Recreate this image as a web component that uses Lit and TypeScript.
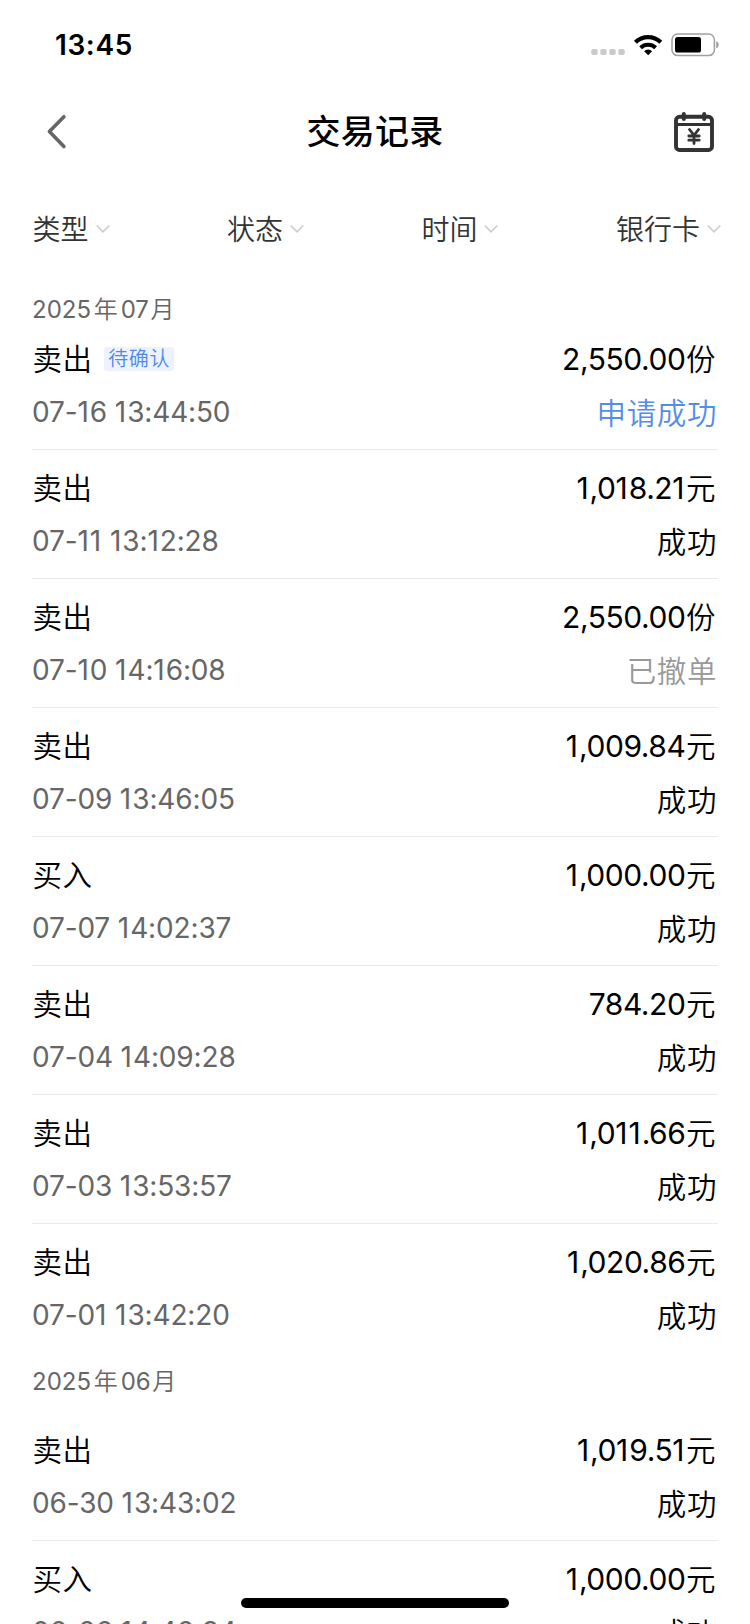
import { LitElement, html, css, svg } from "lit";
import { customElement, property } from "lit/decorators.js";
import { classMap } from "lit/directives/class-map.js";

type Tone = "normal" | "pending" | "muted";

interface Trade {
  kind: string;
  tag?: string;
  time: string;
  amount: string;
  unit: string;
  status: string;
  tone?: Tone;
}

interface MonthGroup {
  year: string;
  month: string;
  trades: Trade[];
}

const GROUPS: MonthGroup[] = [
  {
    year: "2025",
    month: "07",
    trades: [
      { kind: "卖出", tag: "待确认", time: "07-16 13:44:50", amount: "2,550.00", unit: "份", status: "申请成功", tone: "pending" },
      { kind: "卖出", time: "07-11 13:12:28", amount: "1,018.21", unit: "元", status: "成功" },
      { kind: "卖出", time: "07-10 14:16:08", amount: "2,550.00", unit: "份", status: "已撤单", tone: "muted" },
      { kind: "卖出", time: "07-09 13:46:05", amount: "1,009.84", unit: "元", status: "成功" },
      { kind: "买入", time: "07-07 14:02:37", amount: "1,000.00", unit: "元", status: "成功" },
      { kind: "卖出", time: "07-04 14:09:28", amount: "784.20", unit: "元", status: "成功" },
      { kind: "卖出", time: "07-03 13:53:57", amount: "1,011.66", unit: "元", status: "成功" },
      { kind: "卖出", time: "07-01 13:42:20", amount: "1,020.86", unit: "元", status: "成功" },
    ],
  },
  {
    year: "2025",
    month: "06",
    trades: [
      { kind: "卖出", time: "06-30 13:43:02", amount: "1,019.51", unit: "元", status: "成功" },
      { kind: "买入", time: "06-26 14:46:34", amount: "1,000.00", unit: "元", status: "成功" },
    ],
  },
];

/** Gives the narrow digit 1 a little more room than its neighbours. */
const spaced = (text: string) =>
  text.split(/(1)/).map((part) => (part === "1" ? html`<span class="one">1</span>` : part));

@customElement("status-bar")
export class StatusBar extends LitElement {
  static styles = css`
    :host {
      display: flex;
      justify-content: space-between;
      height: 90px;
      padding: 0 30px 0 55px;
      box-sizing: border-box;
      align-items: center;
    }
    .clock {
      font-size: 28px;
      font-weight: 600;
      line-height: 34px;
      letter-spacing: 0.6px;
    }
    .icons {
      display: block;
    }
  `;

  render() {
    return html`
      <span class="clock">13:45</span>
      <svg class="icons" width="130" height="30" viewBox="590 30 130 30">
        <g fill="#cacaca">
          ${[591.3, 600.3, 609.3, 618.3].map((x) => svg`<rect x=${x} y="49" width="6.4" height="6" rx="1.8" />`)}
        </g>
        <g fill="none" stroke="#000" stroke-width="4.2">
          <path d="M635.4 42.2a18.3 18.3 0 0 1 25.4 0" />
          <path d="M640.6 47.8a11 11 0 0 1 15 0" stroke-width="4" />
        </g>
        <path d="M648.1 55.2l-4-4a5.8 5.8 0 0 1 8 0z" />
        <rect x="672" y="34.1" width="42.4" height="21.4" rx="5.6" fill="none" stroke="#a0a0a0" stroke-width="1.5" />
        <rect x="675" y="37.1" width="26" height="15.4" rx="2.6" />
        <path d="M716.2 41.2c3.4 1.2 3.4 5.8 0 7z" fill="#a0a0a0" />
      </svg>
    `;
  }
}

@customElement("nav-header")
export class NavHeader extends LitElement {
  static styles = css`
    :host {
      display: grid;
      grid-template-columns: 60px 1fr 60px;
      align-items: center;
      height: 84px;
      padding: 0 30px;
    }
    .title {
      margin: 0;
      font-size: 34px;
      font-weight: 500;
      line-height: 48px;
      text-align: center;
      letter-spacing: 0.3px;
    }
    .back,
    .calendar {
      display: block;
    }
    .back {
      margin-left: 10px;
    }
    .calendar {
      justify-self: end;
    }
  `;

  render() {
    return html`
      <svg class="back" width="34" height="40" viewBox="0 0 34 40">
        <path d="M23.9 4.7L9.4 19.6 23.9 34.5" fill="none" stroke="#666" stroke-width="3.6" stroke-linecap="round" stroke-linejoin="round" />
      </svg>
      <h1 class="title">交易记录</h1>
      <svg class="calendar" width="52" height="48" viewBox="668 108 52 48" fill="none" stroke="#333" stroke-linecap="round">
        <rect x="676" y="116.8" width="36" height="33.2" rx="3.5" stroke-width="3.9" />
        <path d="M676 124.5h36" stroke-width="3" stroke-linecap="butt" />
        <path d="M683.8 114v5M704.2 114v5" stroke-width="4" />
        <path d="M689.5 129.5l4.5 5.8 4.5-5.8M694 135.5v8M688.8 136h10.4M688.8 140.2h10.4" stroke-width="2.8" />
      </svg>
    `;
  }
}

@customElement("filter-bar")
export class FilterBar extends LitElement {
  static styles = css`
    :host {
      display: flex;
      justify-content: space-between;
      align-items: center;
      height: 110px;
      padding: 0 29px 0 32.5px;
    }
    .filter {
      display: flex;
      align-items: center;
      gap: 7px;
      font-size: 28px;
      line-height: 40px;
      color: #333;
    }
    .label {
      padding-top: 2px;
    }
    .chevron {
      display: block;
    }
  `;

  render() {
    return html`${["类型", "状态", "时间", "银行卡"].map(
      (label) => html`
        <div class="filter">
          <span class="label">${label}</span>
          <svg class="chevron" width="14" height="10" viewBox="0 0 14 10">
            <path d="M0.7 1.5l6.3 6.3 6.3-6.3" fill="none" stroke="#ccc" stroke-width="1.6" />
          </svg>
        </div>
      `
    )}`;
  }
}

@customElement("trade-row")
export class TradeRow extends LitElement {
  static styles = css`
    :host {
      display: flex;
      justify-content: space-between;
      height: 129px;
      box-sizing: border-box;
      border-bottom: 1px solid #ebebeb;
    }
    :host([last]) {
      border-bottom-color: transparent;
    }
    .side {
      display: flex;
      flex-direction: column;
    }
    .left {
      padding-top: 16px;
      gap: 9px;
    }
    .right {
      padding: 16px 1px 0 0;
      gap: 10px;
      align-items: flex-end;
    }
    .line {
      display: flex;
      align-items: center;
      height: 44px;
      font-size: 29.5px;
      line-height: 44px;
      letter-spacing: 0.6px;
      white-space: nowrap;
    }
    .kind {
      padding-left: 0.5px;
    }
    .tag {
      margin-left: 11.5px;
      padding: 0 3.5px 0 4px;
      height: 24px;
      line-height: 25px;
      border-radius: 3px;
      font-size: 20px;
      letter-spacing: 0.6px;
      color: #5088e8;
      background: #ecf3fe;
    }
    .time {
      font-size: 28px;
      font-weight: 400;
      letter-spacing: -0.15px;
      color: #666;
    }
    .amount {
      font-size: 30px;
      font-weight: 400;
      letter-spacing: -0.45px;
      padding-right: 0.5px;
    }
    .one {
      letter-spacing: 1px;
    }
    .unit {
      padding-right: 1px;
    }
    .pending {
      color: #548de8;
    }
    .muted {
      color: #999;
    }
  `;

  @property({ attribute: false }) trade!: Trade;
  @property({ type: Boolean, reflect: true }) last = false;

  render() {
    const t = this.trade;
    return html`
      <div class="side left">
        <div class="line kind">${t.kind}${t.tag ? html`<span class="tag">${t.tag}</span>` : null}</div>
        <div class="line"><span class="time">${spaced(t.time)}</span></div>
      </div>
      <div class="side right">
        <div class="line"><span class="amount">${spaced(t.amount)}</span><span class="unit">${t.unit}</span></div>
        <div class=${classMap({ line: true, pending: t.tone === "pending", muted: t.tone === "muted" })}>${t.status}</div>
      </div>
    `;
  }
}

@customElement("app-root")
export class AppRoot extends LitElement {
  static styles = css`
    :host {
      display: block;
      position: relative;
      height: 1624px;
      overflow: hidden;
      background: #fff;
      color: #000;
      font-family: Inter, "Noto Sans CJK SC", sans-serif;
      font-weight: 350;
    }
    .records {
      padding: 0 32px;
    }
    .month {
      display: flex;
      gap: 2px;
      height: 59px;
      font-size: 24px;
      line-height: 58px;
      color: #666;
    }
    .month.first {
      height: 37px;
      line-height: 52px;
    }
    .digits {
      font-weight: 400;
    }
    .year-number {
      padding-right: 0.8px;
    }
    .month-number {
      padding-left: 1px;
      letter-spacing: -0.3px;
    }
    .home-indicator {
      position: absolute;
      left: 241px;
      bottom: 16px;
      width: 268px;
      height: 10px;
      border-radius: 5px;
      background: #000;
    }
  `;

  render() {
    return html`
      <status-bar></status-bar>
      <nav-header></nav-header>
      <filter-bar></filter-bar>
      <main class="records">
        ${GROUPS.map(
          (group, i) => html`
            <div class=${classMap({ month: true, first: i === 0 })}>
              <span class="digits year-number">${group.year}</span><span>年</span><span class="digits month-number">${group.month}</span><span>月</span>
            </div>
            ${group.trades.map(
              (trade, j) => html`<trade-row .trade=${trade} ?last=${j === group.trades.length - 1}></trade-row>`
            )}
          `
        )}
      </main>
      <div class="home-indicator"></div>
    `;
  }
}
